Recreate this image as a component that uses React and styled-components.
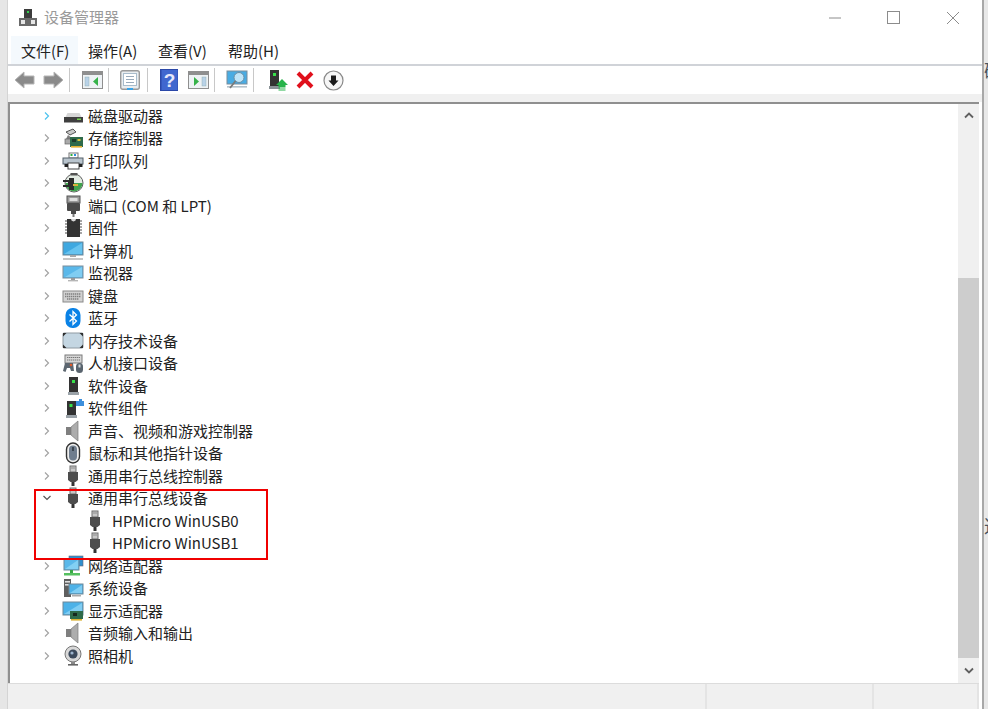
import styled, { createGlobalStyle } from 'styled-components';

const GlobalStyle = createGlobalStyle`
  html, body {
    margin: 0;
    height: 100%;
    overflow: hidden;
    background: #e8e8e8;
  }
  body {
    font-family: "Noto Sans CJK SC", "Noto Sans", sans-serif;
    color: #222;
  }
`

const Page = styled.div`
  position: relative;
  display: flex;
  width: 988px;
  height: 709px;
`

const LeftEdge = styled.div`
  width: 8px;
  background: #e6e6e6;
  box-shadow: inset -1px 0 0 #d4d4d4;
`

const RightEdge = styled.div`
  width: 6px;
  overflow: hidden;
  background: #e8e8e8;
  border-left: 2px solid #a8a8a8;
  box-sizing: border-box;
`

const EdgeGlyph = styled.div`
  margin-top: ${p => p.$top}px;
  height: 20px;
  width: 18px;
  font-size: 18px;
  line-height: 20px;
  color: #4a5560;
`

const Window = styled.div`
  flex: 1;
  display: flex;
  flex-direction: column;
  background: #fff;
`

const TitleBar = styled.div`
  height: 36px;
  display: flex;
  align-items: center;
  padding-left: 10px;
  gap: 6px;
`

const Title = styled.div`
  flex: 1;
  font-size: 15px;
  line-height: 20px;
  color: #9a9a9a;
  margin-top: -3px;
`

const WinButtons = styled.div`
  display: flex;
  margin-top: -1px;
`

const WinButton = styled.div`
  width: 59px;
  height: 30px;
  display: flex;
  align-items: center;
  justify-content: center;
  color: #8c8c8c;
`

const MenuBar = styled.div`
  height: 28px;
  display: flex;
  padding-left: 3px;
  border-bottom: 2px solid #d0d3d8;
`

const MenuItem = styled.div`
  width: ${p => p.$w}px;
  padding: 1px 0 0 10px;
  box-sizing: border-box;
  display: flex;
  align-items: center;
  font-size: 15px;
  white-space: nowrap;
  background: ${p => (p.$active ? '#f4f9fd' : 'transparent')};
`

const Toolbar = styled.div`
  height: 28px;
  display: flex;
  align-items: center;
  padding-left: 6px;
`

const ToolButton = styled.div`
  margin-left: ${p => p.$ml || 0}px;
  height: 24px;
  display: flex;
  align-items: center;
  justify-content: center;
`

const ToolSep = styled.div`
  width: 1px;
  height: 24px;
  margin-left: ${p => p.$ml}px;
  background: #c8c8c8;
`

const Strip = styled.div`
  height: 8px;
  background: #f0f0f0;
`

const TreeFrame = styled.div`
  flex: 1;
  min-height: 0;
  display: flex;
  margin-right: 3px;
  border-top: 2px solid #8f8f8f;
  border-left: 2px solid #8f8f8f;
`

const TreeList = styled.div`
  flex: 1;
  padding-top: 0.5px;
  overflow: hidden;
`

const Row = styled.div`
  height: 22.5px;
  display: flex;
  align-items: center;
  padding-left: ${p => (p.$child ? 74 : 29)}px;
`

const Caret = styled.div`
  width: 16px;
  height: 16px;
  display: flex;
  align-items: center;
  justify-content: center;
  color: ${p => p.$color || '#a3a3a3'};
`

const RowIcon = styled.div`
  width: 22px;
  height: 22px;
  margin-left: ${p => (p.$child ? 0 : 7)}px;
  margin-right: ${p => (p.$child ? 6 : 4)}px;
  flex-shrink: 0;
`

const RowLabel = styled.div`
  font-size: 15px;
  line-height: 22px;
  white-space: nowrap;
  color: #222;
`

const Scrollbar = styled.div`
  width: 21px;
  display: flex;
  flex-direction: column;
  background: #f0f0f0;
`

const ScrollButton = styled.div`
  height: ${p => p.$h}px;
  display: flex;
  align-items: center;
  justify-content: center;
  color: #606060;
`

const ScrollTrack = styled.div`
  flex: 1;
  display: flex;
  flex-direction: column;
  padding-top: 152px;
`

const ScrollThumb = styled.div`
  flex: 1;
  background: #cdcdcd;
`

const StatusBar = styled.div`
  height: 25px;
  display: flex;
  background: #f0f0f0;
  border-top: 1px solid #dcdcdc;
  margin-right: 3px;
`

const StatusCell = styled.div`
  width: ${p => p.$w}px;
  border-right: 2px solid #e4e4e4;
  box-sizing: border-box;
`

const Callout = styled.div`
  position: absolute;
  left: 34px;
  top: 489px;
  width: 234px;
  height: 71px;
  border: 2px solid #f00000;
  box-sizing: border-box;
  pointer-events: none;
`

const Svg = ({ size = 22, children }) => (
  <svg width={size} height={size} viewBox={`0 0 ${size} ${size}`} style={{ display: 'block' }}>{children}</svg>
)

// tree icons
const DiskIcon = () => (
  <Svg>
    <path d="M3.5 12 L5.5 8 H17.5 L19.5 12Z" fill="#d6d6d6" />
    <rect x="2" y="12" width="19" height="5.5" fill="#3f3f3f" />
    <rect x="15" y="13.5" width="4" height="1.5" fill="#6fcf4f" />
  </Svg>
)
const StorageIcon = () => (
  <Svg>
    <path d="M4 5 L11 2 L14 5 L8 8Z" fill="#c9c9c9" stroke="#555" />
    <path d="M6 8 L11 12 H4Z" fill="#7d7d7d" />
    <rect x="3" y="12" width="8" height="5" fill="#aaa" stroke="#666" strokeWidth=".7" />
    <rect x="8" y="10" width="13" height="10" fill="#2e6a4a" />
    <rect x="10" y="12" width="4" height="3" fill="#1d3a2a" />
    <rect x="15.5" y="12" width="3" height="2" fill="#d6c23c" />
    <rect x="9" y="19" width="11" height="1.6" fill="#e0b030" />
  </Svg>
)
const PrinterIcon = () => (
  <Svg>
    <rect x="7" y="3" width="9" height="5" fill="#fff" stroke="#777" />
    <rect x="8.5" y="4" width="2" height="2" fill="#30b040" />
    <rect x="12" y="4" width="2" height="2" fill="#3090e0" />
    <rect x="1" y="8" width="20" height="6" fill="#b9c4cd" stroke="#55606a" />
    <rect x="6" y="13" width="11" height="6" fill="#fff" stroke="#444" />
    <rect x="2.5" y="14" width="3.5" height="3" fill="#222" />
    <rect x="17" y="14" width="3.5" height="3" fill="#222" />
  </Svg>
)
const BatteryIcon = () => (
  <Svg>
    <circle cx="12" cy="11" r="9" fill="#e4ece4" stroke="#5e5e5e" />
    <path d="M3.5 11 a8.5 8.5 0 0 0 17 0 Z" fill="#3fa34d" />
    <rect x="8.5" y="1" width="7" height="2.5" fill="#555" />
    <path d="M1 8 H7 V6 H12 V18 H7 V15 H1 V13 H6 V10 H1Z" fill="#2b2b2b" />
    <path d="M11 13 H16" stroke="#d9b13a" strokeWidth="2" />
  </Svg>
)
const PortIcon = () => (
  <Svg>
    <rect x="5" y="1" width="13" height="7" fill="#9a9a9a" stroke="#555" />
    <rect x="7.5" y="3" width="8" height="3" fill="#dedede" />
    <rect x="5" y="8" width="13" height="8" rx="1" fill="#4a4a4a" />
    <rect x="9" y="16" width="5" height="3" fill="#4a4a4a" />
    <rect x="10.5" y="19" width="2" height="3" fill="#7c7c7c" />
  </Svg>
)
const ChipIcon = () => (
  <Svg>
    <rect x="5" y="2" width="13" height="18" fill="#333" />
    <path d="M3 4h2M3 7h2M3 10h2M3 13h2M3 16h2M18 4h2M18 7h2M18 10h2M18 13h2M18 16h2" stroke="#888" strokeWidth="1.4" />
    <path d="M9 2 a2.5 2.5 0 0 0 5 0Z" fill="#d8d8d8" />
  </Svg>
)
const ComputerIcon = () => (
  <Svg>
    <rect x="1" y="2" width="20" height="13" fill="#3fa8e0" stroke="#6f8797" />
    <path d="M2 14 L20 3 V14Z" fill="#67c3ef" />
    <rect x="8" y="15" width="6" height="2" fill="#a8a8a8" />
    <rect x="1" y="18" width="20" height="2" fill="#c6c6c6" />
  </Svg>
)
const MonitorIcon = () => (
  <Svg>
    <rect x="1" y="4" width="20" height="12" fill="#5ab8ea" stroke="#7a8d9b" />
    <path d="M3 15 L20 5 V15Z" fill="#80cdf2" />
    <rect x="9" y="16" width="4" height="2" fill="#9a9a9a" />
    <rect x="6" y="18" width="10" height="1.4" fill="#b6b6b6" />
  </Svg>
)
const KeyboardIcon = () => (
  <Svg>
    <rect x="1" y="6" width="20" height="11" fill="#d2d2d2" stroke="#8a8a8a" />
    <path d="M3 9h16M3 11.5h16M5 14h12" stroke="#7f7f7f" strokeWidth="1.3" strokeDasharray="1.4 .6" />
  </Svg>
)
const BluetoothIcon = () => (
  <Svg>
    <rect x="3.5" y="1" width="15" height="20" rx="7" fill="#0a82e6" />
    <path d="M7.5 7.5 L14.5 14 L11 17.5 V4.5 L14.5 8 L7.5 14.5" fill="none" stroke="#fff" strokeWidth="1.3" />
  </Svg>
)
const MemoryIcon = () => (
  <Svg>
    <rect x="1" y="3" width="20" height="15" rx="1" fill="#c4d6e2" stroke="#8f9aa2" />
    <path d="M1 3h3.5L1 6.5ZM21 3h-3.5L21 6.5ZM1 18h3.5L1 14.5ZM21 18h-3.5L21 14.5Z" fill="#2f2f2f" />
  </Svg>
)
const HidIcon = () => (
  <Svg>
    <rect x="3" y="3" width="17" height="8" fill="#d6d6d6" stroke="#7b7b7b" />
    <path d="M5 5.5h13M5 8h13" stroke="#777" strokeDasharray="1.4 .6" />
    <path d="M1 19 L3 11 H11 L12 19 H9 L8 16 H5 L3.5 20Z" fill="#5c6670" />
    <circle cx="9" cy="13" r="1.3" fill="#e05a2a" />
    <rect x="14" y="11" width="7" height="10" rx="3.5" fill="#59646e" />
    <rect x="16.5" y="12.5" width="2" height="3" fill="#cfd6da" />
  </Svg>
)
const SoftDeviceIcon = () => (
  <Svg>
    <rect x="7" y="2" width="9" height="16" fill="#333" />
    <rect x="10" y="5" width="3" height="3" fill="#38e04a" />
    <rect x="6" y="17" width="11" height="3" fill="#9aa2a8" />
  </Svg>
)
const SoftPartIcon = () => (
  <Svg>
    <rect x="5" y="4" width="9" height="15" fill="#333" />
    <rect x="7.5" y="7" width="3" height="3" fill="#38e04a" />
    <rect x="4" y="18" width="11" height="3" fill="#9aa2a8" />
    <path d="M14 4 h3 V2 h3 v2 h2 v5 h-8Z" fill="#3d8fdc" />
  </Svg>
)
const SpeakerIcon = () => (
  <Svg>
    <rect x="4" y="7" width="6" height="8" fill="#7f7f7f" />
    <path d="M9 7 L16 1 V21 L9 15Z" fill="#adadad" stroke="#7d7d7d" strokeWidth=".7" />
  </Svg>
)
const MouseIcon = () => (
  <Svg>
    <rect x="4.5" y="1" width="13" height="20" rx="6.5" fill="#eee" stroke="#333" strokeWidth="1.4" />
    <rect x="7" y="3.5" width="8" height="15" rx="4" fill="#6f7d8e" />
    <rect x="10" y="5" width="2" height="4" fill="#3c4650" />
  </Svg>
)
const UsbIcon = () => (
  <Svg>
    <rect x="8" y="1" width="6" height="6" fill="#c8c8c8" stroke="#6e6e6e" />
    <rect x="9.5" y="2.5" width="1" height="1" fill="#555" />
    <rect x="11.5" y="2.5" width="1" height="1" fill="#555" />
    <path d="M6 7 H16 V15 L13.5 17 H8.5 L6 15Z" fill="#4d4d4d" />
    <rect x="9.5" y="17" width="3" height="4" fill="#333" />
  </Svg>
)
const NetworkIcon = () => (
  <Svg>
    <rect x="7" y="1" width="14" height="10" fill="#2f90cf" stroke="#667" strokeWidth=".6" />
    <rect x="2" y="4" width="15" height="11" fill="#5ab8ea" stroke="#6f8797" />
    <path d="M3 14 L16 5 V14Z" fill="#82d0f4" />
    <rect x="8" y="15" width="3" height="3" fill="#39a845" />
    <rect x="2" y="18" width="16" height="2.5" fill="#56c060" />
  </Svg>
)
const SystemIcon = () => (
  <Svg>
    <rect x="2" y="2" width="7" height="18" fill="#5f5f5f" />
    <rect x="3" y="4" width="5" height="1.6" fill="#ddd" />
    <rect x="3" y="7" width="5" height="1.6" fill="#ddd" />
    <rect x="7" y="7" width="14" height="10" fill="#4db2e8" stroke="#6f8797" />
    <path d="M8 16 L20 8 V16Z" fill="#7fcdf3" />
    <rect x="10" y="18" width="9" height="1.5" fill="#aaa" />
  </Svg>
)
const DisplayIcon = () => (
  <Svg>
    <rect x="1" y="2" width="20" height="13" fill="#4db2e8" stroke="#6f8797" />
    <path d="M2 14 L20 3 V14Z" fill="#7fcdf3" />
    <rect x="8" y="11" width="13" height="8" fill="#2e6a4a" />
    <rect x="11" y="13" width="4" height="3" fill="#16281e" />
    <rect x="9" y="19" width="11" height="1.6" fill="#d9b030" />
  </Svg>
)
const CameraIcon = () => (
  <Svg>
    <circle cx="11" cy="9" r="8" fill="#d8d8d8" stroke="#777" />
    <circle cx="11" cy="9" r="4.6" fill="#3c4a5c" />
    <circle cx="10" cy="8" r="1.6" fill="#9db5cf" />
    <rect x="9" y="17" width="4" height="2" fill="#888" />
    <rect x="6" y="19" width="10" height="1.6" fill="#666" />
  </Svg>
)

// toolbar icons
const BackIcon = () => (
  <svg width="21" height="20" viewBox="0 0 21 20">
    <path d="M1 10 L10 2 V6 H20 V14 H10 V18Z" fill="#8a8a8a" stroke="#b5b5b5" />
  </svg>
)
const ForwardIcon = () => (
  <svg width="21" height="20" viewBox="0 0 21 20">
    <path d="M20 10 L11 2 V6 H1 V14 H11 V18Z" fill="#8a8a8a" stroke="#b5b5b5" />
  </svg>
)
const PaneIcon = ({ flip }) => (
  <svg width="21" height="18" viewBox="0 0 21 18">
    <rect x=".5" y=".5" width="20" height="17" fill="#eef2f5" stroke="#8f8f8f" />
    <rect x="1" y="1" width="19" height="3" fill="#8f8f8f" />
    <rect x={flip ? 14 : 3} y="6" width="4" height="9" fill="#b9d2e8" stroke="#8aa" strokeWidth=".4" />
    <path d={flip ? 'M6 6 L11 10.5 L6 15Z' : 'M16 6 L11 10.5 L16 15Z'} fill="#37b24a" />
  </svg>
)
const PropsIcon = () => (
  <svg width="20" height="21" viewBox="0 0 20 21">
    <rect x=".7" y=".7" width="18.6" height="18.6" rx="2" fill="#e9edf0" stroke="#9a9a9a" strokeWidth="1.4" />
    <rect x="3.5" y="3.5" width="13" height="12" fill="#fff" stroke="#a9bccb" />
    <path d="M6 6.5h8M6 9.5h8M6 12.5h8" stroke="#9ab" />
    <rect x="7" y="18" width="6" height="2" fill="#36a2e8" />
  </svg>
)
const HelpIcon = () => (
  <svg width="18" height="22" viewBox="0 0 18 22">
    <rect width="18" height="22" fill="#2b48a8" />
    <rect x="1.5" y="1" width="16" height="20" fill="#4067cf" />
    <text x="9.5" y="17.5" textAnchor="middle" fontSize="19" fontWeight="700" fontFamily="Liberation Sans" fill="#e6e8fa">?</text>
  </svg>
)
const ScanIcon = () => (
  <svg width="22" height="20" viewBox="0 0 22 20">
    <rect x="1" y="1" width="20" height="13" fill="#49ace3" stroke="#7a8d9b" />
    <rect x="1" y="16" width="20" height="1.6" fill="#b5c2cb" />
    <circle cx="13" cy="7.5" r="5" fill="#bfe5f8" stroke="#6a8ea5" />
    <path d="M9.5 11 L4 18" stroke="#7a7a7a" strokeWidth="1.8" />
  </svg>
)
const UpdateIcon = () => (
  <svg width="20" height="23" viewBox="0 0 20 23">
    <rect x="2" y="1" width="9" height="17" fill="#333" />
    <rect x="5" y="4" width="3" height="3" fill="#38e04a" />
    <rect x="1" y="17" width="11" height="3" fill="#8a9297" />
    <path d="M14 10 L20 16 H17.5 V18 H10.5 V16 H8Z" fill="#26b34a" />
    <path d="M10.5 19 H17.5 M10.5 21 H17.5" stroke="#26b34a" strokeWidth="1.2" />
  </svg>
)
const RemoveIcon = () => (
  <svg width="18" height="18" viewBox="0 0 18 18">
    <path d="M2 2 L16 16 M16 2 L2 16" stroke="#e0101c" strokeWidth="4" />
  </svg>
)
const InstallIcon = () => (
  <svg width="21" height="21" viewBox="0 0 21 21">
    <circle cx="10.5" cy="10.5" r="9.5" fill="#f6f6f6" stroke="#8a8a8a" strokeWidth="1.2" />
    <path d="M10.5 16 L5.5 10.5 H8 V5.5 H13 V10.5 H15.5Z" fill="#1a1a1a" />
  </svg>
)
const AppIcon = () => (
  <svg width="20" height="20" viewBox="0 0 20 20">
    <rect x="6" y="1" width="8" height="9" fill="#3c3c3c" />
    <rect x="9" y="3" width="2" height="2" fill="#36d050" />
    <rect x="1" y="10" width="18" height="8" fill="#6a6a6a" />
    <rect x="3" y="12" width="4" height="4" fill="#e6e6e6" />
    <rect x="13" y="12" width="4" height="4" fill="#e6e6e6" />
  </svg>
)

const ChevronRight = () => (
  <svg width="8" height="10" viewBox="0 0 8 10">
    <path d="M2 1.5 L5.5 5 L2 8.5" fill="none" stroke="currentColor" strokeWidth="1.2" />
  </svg>
)
const ChevronDown = () => (
  <svg width="10" height="8" viewBox="0 0 10 8">
    <path d="M1.5 2 L5 5.5 L8.5 2" fill="none" stroke="#555" strokeWidth="1.2" />
  </svg>
)
const ScrollArrow = ({ down }) => (
  <svg width="10" height="7" viewBox="0 0 10 7">
    <path d={down ? 'M1 1.5 L5 5.5 L9 1.5' : 'M1 5.5 L5 1.5 L9 5.5'} fill="none" stroke="currentColor" strokeWidth="1.8" />
  </svg>
)

const ROWS = [
  { label: '磁盘驱动器', Icon: DiskIcon, hot: true },
  { label: '存储控制器', Icon: StorageIcon },
  { label: '打印队列', Icon: PrinterIcon },
  { label: '电池', Icon: BatteryIcon },
  { label: '端口 (COM 和 LPT)', Icon: PortIcon },
  { label: '固件', Icon: ChipIcon },
  { label: '计算机', Icon: ComputerIcon },
  { label: '监视器', Icon: MonitorIcon },
  { label: '键盘', Icon: KeyboardIcon },
  { label: '蓝牙', Icon: BluetoothIcon },
  { label: '内存技术设备', Icon: MemoryIcon },
  { label: '人机接口设备', Icon: HidIcon },
  { label: '软件设备', Icon: SoftDeviceIcon },
  { label: '软件组件', Icon: SoftPartIcon },
  { label: '声音、视频和游戏控制器', Icon: SpeakerIcon },
  { label: '鼠标和其他指针设备', Icon: MouseIcon },
  { label: '通用串行总线控制器', Icon: UsbIcon },
  { label: '通用串行总线设备', Icon: UsbIcon, open: true },
  { label: 'HPMicro WinUSB0', Icon: UsbIcon, child: true },
  { label: 'HPMicro WinUSB1', Icon: UsbIcon, child: true },
  { label: '网络适配器', Icon: NetworkIcon },
  { label: '系统设备', Icon: SystemIcon },
  { label: '显示适配器', Icon: DisplayIcon },
  { label: '音频输入和输出', Icon: SpeakerIcon },
  { label: '照相机', Icon: CameraIcon },
]

export default function App() {
  return (
    <Page>
      <GlobalStyle />
      <LeftEdge />
      <Window>
        <TitleBar>
          <AppIcon />
          <Title>设备管理器</Title>
          <WinButtons>
            <WinButton>
              <svg width="14" height="2"><path d="M1 1H13" stroke="currentColor" /></svg>
            </WinButton>
            <WinButton>
              <svg width="13" height="13"><rect x=".5" y=".5" width="12" height="12" fill="none" stroke="currentColor" /></svg>
            </WinButton>
            <WinButton>
              <svg width="14" height="14"><path d="M1 1L13 13M13 1L1 13" stroke="currentColor" /></svg>
            </WinButton>
          </WinButtons>
        </TitleBar>
        <MenuBar>
          <MenuItem $w={67} $active>文件(F)</MenuItem>
          <MenuItem $w={70}>操作(A)</MenuItem>
          <MenuItem $w={70}>查看(V)</MenuItem>
          <MenuItem $w={70}>帮助(H)</MenuItem>
        </MenuBar>
        <Toolbar>
          <ToolButton><BackIcon /></ToolButton>
          <ToolButton $ml={8}><ForwardIcon /></ToolButton>
          <ToolSep $ml={5} />
          <ToolButton $ml={12}><PaneIcon /></ToolButton>
          <ToolSep $ml={5} />
          <ToolButton $ml={11}><PropsIcon /></ToolButton>
          <ToolSep $ml={7} />
          <ToolButton $ml={12}><HelpIcon /></ToolButton>
          <ToolButton $ml={10}><PaneIcon flip /></ToolButton>
          <ToolSep $ml={5} />
          <ToolButton $ml={11}><ScanIcon /></ToolButton>
          <ToolSep $ml={5} />
          <ToolButton $ml={14}><UpdateIcon /></ToolButton>
          <ToolButton $ml={8}><RemoveIcon /></ToolButton>
          <ToolButton $ml={9}><InstallIcon /></ToolButton>
        </Toolbar>
        <Strip />
        <TreeFrame>
          <TreeList>
            {ROWS.map(({ label, Icon, hot, open, child }) => (
              <Row key={label} $child={child}>
                {!child && (
                  <Caret $color={hot ? '#4cc2ee' : undefined}>
                    {open ? <ChevronDown /> : <ChevronRight />}
                  </Caret>
                )}
                <RowIcon $child={child}><Icon /></RowIcon>
                <RowLabel>{label}</RowLabel>
              </Row>
            ))}
          </TreeList>
          <Scrollbar>
            <ScrollButton $h={22}><ScrollArrow /></ScrollButton>
            <ScrollTrack><ScrollThumb /></ScrollTrack>
            <ScrollButton $h={25}><ScrollArrow down /></ScrollButton>
          </Scrollbar>
        </TreeFrame>
        <StatusBar>
          <StatusCell $w={699} />
          <StatusCell $w={167} />
          <StatusCell $w={105} />
        </StatusBar>
      </Window>
      <RightEdge>
        <EdgeGlyph $top={60}>码</EdgeGlyph>
        <EdgeGlyph $top={435}>这</EdgeGlyph>
      </RightEdge>
      <Callout />
    </Page>
  )
}
